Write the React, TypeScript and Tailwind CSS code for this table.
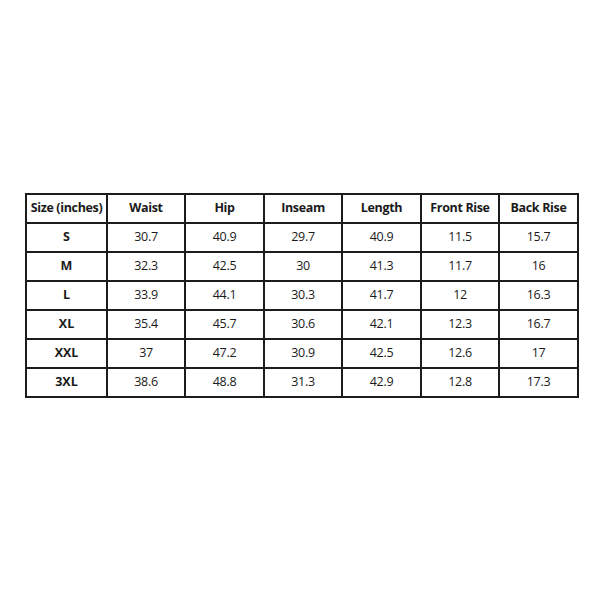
const HEADERS = ["Size (inches)", "Waist", "Hip", "Inseam", "Length", "Front Rise", "Back Rise"];

const ROWS: [string, string, string, string, string, string, string][] = [
  ["S", "30.7", "40.9", "29.7", "40.9", "11.5", "15.7"],
  ["M", "32.3", "42.5", "30", "41.3", "11.7", "16"],
  ["L", "33.9", "44.1", "30.3", "41.7", "12", "16.3"],
  ["XL", "35.4", "45.7", "30.6", "42.1", "12.3", "16.7"],
  ["XXL", "37", "47.2", "30.9", "42.5", "12.6", "17"],
  ["3XL", "38.6", "48.8", "31.3", "42.9", "12.8", "17.3"],
];

export default function App() {
  return (
    <div className="w-[600px] h-[600px] bg-white pt-[193px] pl-[25px] font-['Open_Sans','Noto_Sans',sans-serif] text-[#1a1a1a]">
      <table className="border-collapse table-fixed w-[552px] text-[12.5px]">
        <colgroup>
          <col className="w-[81px]" />
          <col className="w-[78px]" />
          <col className="w-[79px]" />
          <col className="w-[78px]" />
          <col className="w-[79px]" />
          <col className="w-[78px]" />
          <col className="w-[79px]" />
        </colgroup>
        <thead>
          <tr className="h-[29px]">
            {HEADERS.map((h) => (
              <th
                key={h}
                className="border-2 border-[#1c1c1c] font-bold text-center p-0 whitespace-nowrap tracking-[-0.35px]"
              >
                {h}
              </th>
            ))}
          </tr>
        </thead>
        <tbody>
          {ROWS.map((row) => (
            <tr key={row[0]} className="h-[29px]">
              {row.map((cell, i) => (
                <td
                  key={i}
                  className={`border-2 border-[#1c1c1c] text-center p-0 ${i === 0 ? "font-bold" : "font-normal tracking-[-0.3px]"}`}
                >
                  {cell}
                </td>
              ))}
            </tr>
          ))}
        </tbody>
      </table>
    </div>
  );
}
